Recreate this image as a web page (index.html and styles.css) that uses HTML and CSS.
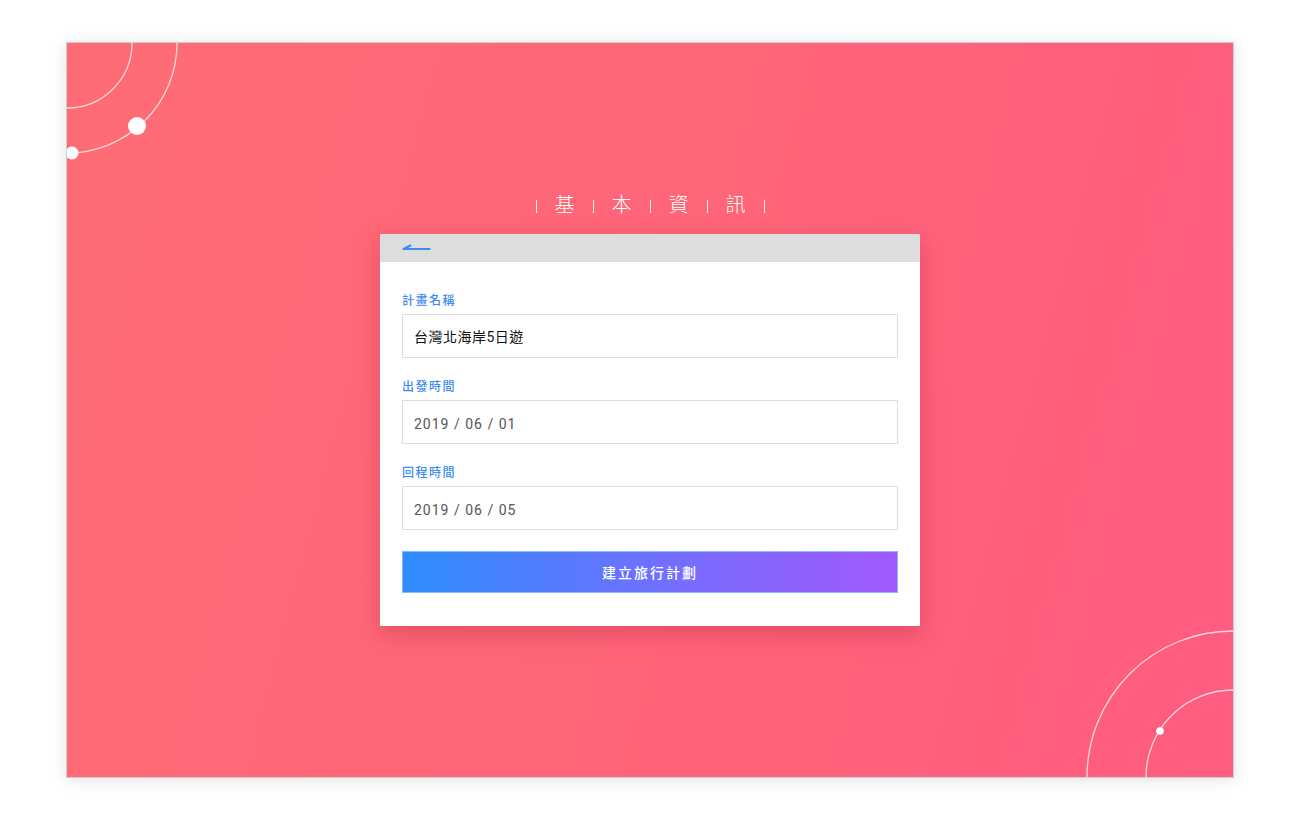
FILE: index.html
```html
<!DOCTYPE html>
<html lang="zh-Hant">
<head>
<meta charset="utf-8">
<title>基本資訊</title>
<link rel="stylesheet" href="styles.css">
</head>
<body>
<div class="frame">
  <svg class="deco deco-tl" width="120" height="120" viewBox="0 0 120 120">
    <circle cx="0" cy="0" r="65" fill="none" stroke="rgba(255,255,255,0.75)" stroke-width="1.3"/>
    <circle cx="0" cy="0" r="110" fill="none" stroke="rgba(255,255,255,0.75)" stroke-width="1.3"/>
    <circle cx="70" cy="83" r="9" fill="#fff"/>
    <circle cx="5" cy="110" r="6.5" fill="#fff"/>
  </svg>
  <svg class="deco deco-br" width="150" height="150" viewBox="0 0 150 150">
    <circle cx="150" cy="150" r="146" fill="none" stroke="rgba(255,255,255,0.75)" stroke-width="1.3"/>
    <circle cx="150" cy="150" r="87" fill="none" stroke="rgba(255,255,255,0.75)" stroke-width="1.3"/>
    <circle cx="77" cy="104" r="3.8" fill="#fff"/>
  </svg>

  <h1 class="title">
    <span class="sep"></span><span class="ch">基</span><span class="sep"></span><span class="ch">本</span><span class="sep"></span><span class="ch">資</span><span class="sep"></span><span class="ch">訊</span><span class="sep"></span>
  </h1>

  <div class="card">
    <div class="card-head">
      <svg class="back" width="30" height="14" viewBox="0 0 30 14">
        <path d="M1.5 11 H27.5 M1.5 11 L8.5 7.5" fill="none" stroke="#3b8cf4" stroke-width="2.2" stroke-linecap="round"/>
      </svg>
    </div>
    <div class="card-body">
      <label class="label">計畫名稱</label>
      <div class="input input-name">台灣北海岸5日遊</div>
      <label class="label">出發時間</label>
      <div class="input input-date">2019 / 06 / 01</div>
      <label class="label">回程時間</label>
      <div class="input input-date">2019 / 06 / 05</div>
      <button class="submit">建立旅行計劃</button>
    </div>
  </div>
</div>
</body>
</html>
```
FILE: styles.css
```css
html, body {
  margin: 0;
  padding: 0;
  background: #ffffff;
}
body {
  padding: 42px 66px;
  font-family: Roboto, "Noto Sans CJK TC", "Noto Sans", sans-serif;
}
.frame {
  position: relative;
  width: 1166px;
  height: 734px;
  border: 1px solid #cfcfcf;
  background: linear-gradient(105deg, #ff6c75 0%, #ff6479 55%, #ff5c80 100%);
  box-shadow: 0 2px 14px rgba(0, 0, 0, 0.12);
  overflow: hidden;
  display: flex;
  flex-direction: column;
  align-items: center;
}
.deco {
  position: absolute;
}
.deco-tl {
  left: 0;
  top: 0;
}
.deco-br {
  right: 0;
  bottom: 0;
}
.title {
  margin: 149px 0 0;
  height: 24px;
  display: flex;
  align-items: center;
  font-family: "Noto Sans CJK TC", sans-serif;
  font-weight: 300;
  font-size: 20px;
  line-height: 24px;
  color: #ffffff;
}
.sep {
  width: 1px;
  height: 13px;
  margin-top: 4px;
  background: rgba(255, 255, 255, 0.9);
}
.ch {
  width: 20px;
  padding: 0 18px;
  text-align: center;
}
.card {
  margin-top: 18px;
  width: 540px;
  background: #ffffff;
  box-shadow: 0 8px 22px rgba(150, 20, 40, 0.28);
}
.card-head {
  height: 28px;
  box-sizing: border-box;
  background: #dddddd;
  padding: 4px 0 0 22px;
}
.back {
  display: block;
}
.card-body {
  padding: 30px 22px 33px;
  display: flex;
  flex-direction: column;
}
.label {
  font-family: "Noto Sans CJK TC", sans-serif;
  font-size: 12px;
  font-weight: 500;
  line-height: 16px;
  letter-spacing: 1.5px;
  color: #3b8cf4;
  margin-bottom: 6px;
}
.input {
  box-sizing: border-box;
  height: 44px;
  border: 1px solid #dcdcdc;
  padding: 0 11px;
  display: flex;
  align-items: center;
  font-size: 14px;
  margin-bottom: 20px;
}
.input-name {
  font-family: Roboto, "Noto Sans CJK TC", sans-serif;
  color: #111111;
  letter-spacing: 0.5px;
}
.input-date {
  color: #555555;
  letter-spacing: 1px;
  padding-top: 3px;
}
.submit {
  margin-top: 1px;
  height: 42px;
  border: 1px solid #8fb7ff;
  background: linear-gradient(90deg, #2e8cff 0%, #7a6bff 60%, #a059ff 100%);
  color: #ffffff;
  font-family: "Noto Sans CJK TC", sans-serif;
  font-size: 14px;
  font-weight: 500;
  letter-spacing: 2px;
  cursor: pointer;
}
```
